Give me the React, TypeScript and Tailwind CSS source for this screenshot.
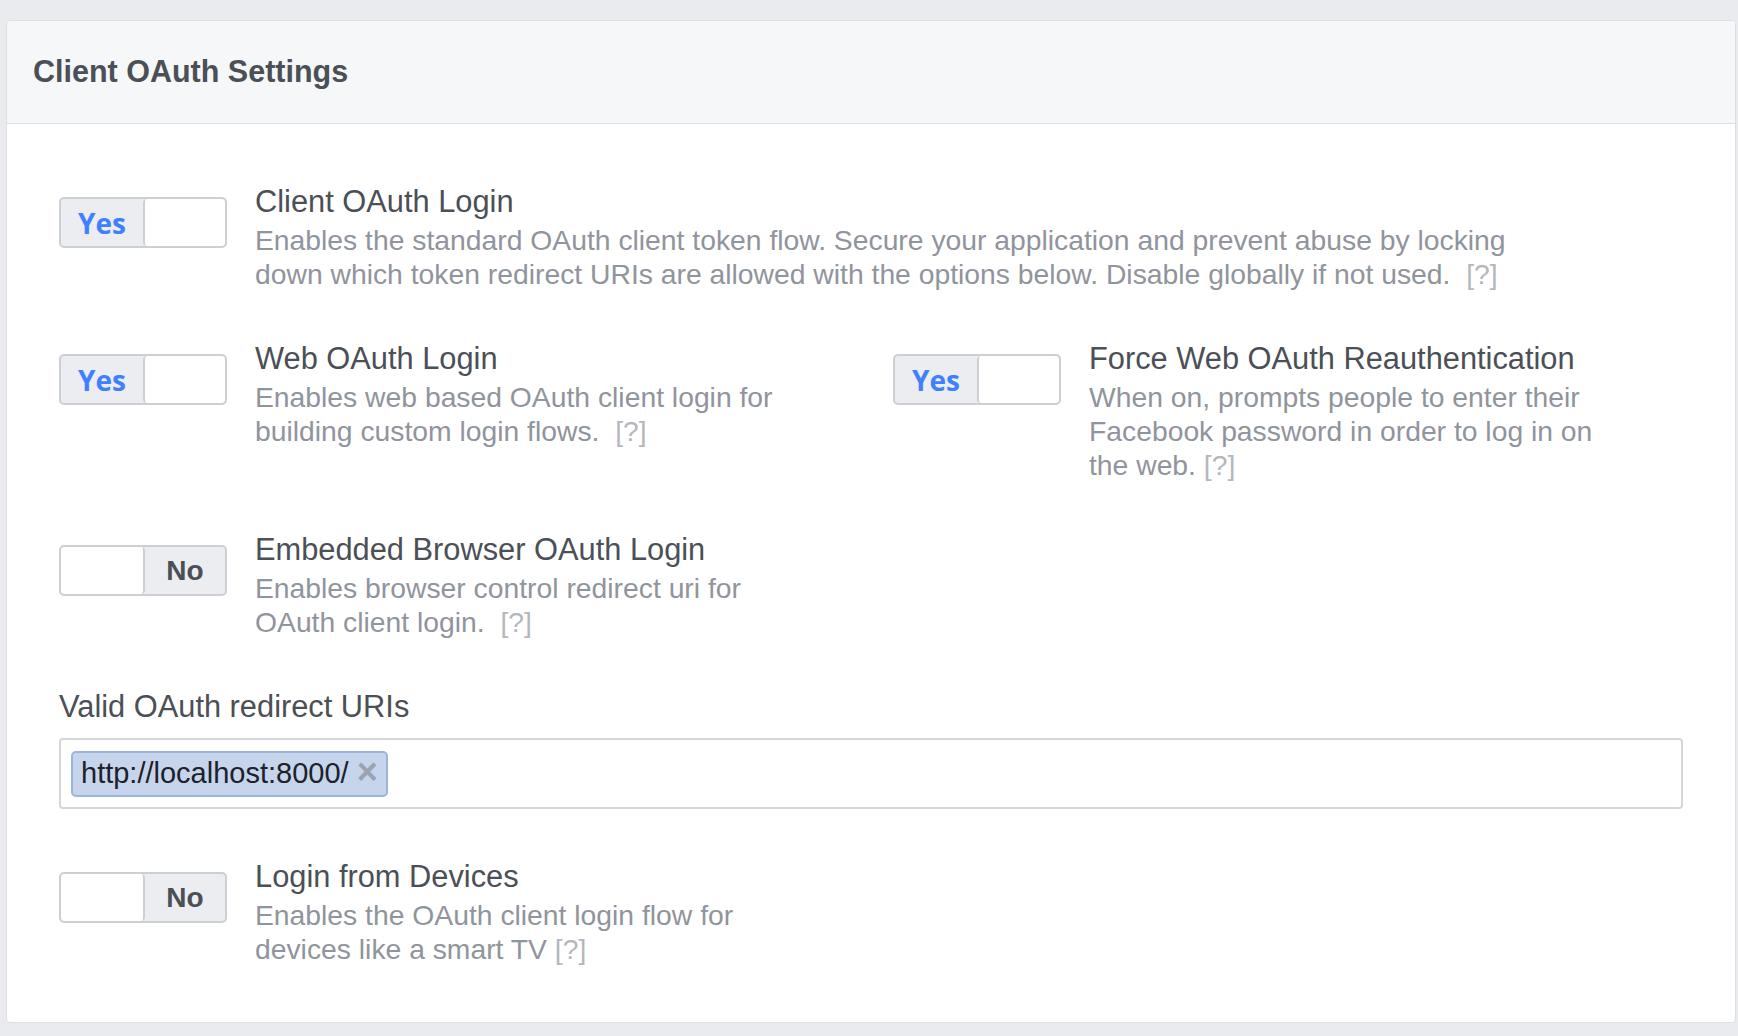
import React from 'react';

const Toggle: React.FC<{ on: boolean }> = ({ on }) => (
  <div className="flex h-[51px] w-[168px] shrink-0 overflow-hidden rounded-[5px] border-2 border-[#ccd0d5] bg-[#ebedf0]">
    {on ? (
      <>
        <div className="flex flex-1 items-center justify-center font-['Open_Sans',sans-serif] text-[28px] font-bold text-[#4080ff]">
          Yes
        </div>
        <div className="w-[82px] rounded-[4px] border-l-2 border-[#ccd0d5] bg-white" />
      </>
    ) : (
      <>
        <div className="w-[84px] rounded-[4px] border-r-2 border-[#ccd0d5] bg-white" />
        <div className="flex flex-1 items-center justify-center text-[28px] font-bold text-[#4b4f56]">No</div>
      </>
    )}
  </div>
);

const Help: React.FC<{ gap?: boolean }> = ({ gap = true }) => (
  <span className="text-[#b4b7bd]">{gap ? '\u00a0\u00a0' : '\u00a0'}[?]</span>
);

const Setting: React.FC<{ on: boolean; title: string; lines: React.ReactNode[] }> = ({ on, title, lines }) => (
  <div className="flex items-start gap-[28px]">
    <div className="mt-[16px]">
      <Toggle on={on} />
    </div>
    <div className="whitespace-nowrap">
      <div className="text-[30.8px] leading-[42px] text-[#4b4f56]">{title}</div>
      <div className="text-[28.3px] leading-[34px] text-[#90949c]">
        {lines.map((line, i) => (
          <div key={i}>{line}</div>
        ))}
      </div>
    </div>
  </div>
);

export default function App() {
  return (
    <div className="min-h-screen bg-[#e9ebee] pb-[16px] pl-[6px] pr-[2px] pt-[20px] font-['Liberation_Sans',Arial,sans-serif]">
      <div className="overflow-hidden rounded-[4px] border border-[#dddfe2] bg-white">
        {/* Header */}
        <div className="flex h-[103px] items-center border-b border-[#dddfe2] bg-[#f6f7f9] pl-[26px]">
          <h2 className="text-[30.5px] font-bold text-[#4b4f56]">Client OAuth Settings</h2>
        </div>

        <div className="flex flex-col gap-[47px] px-[52px] pb-[56px] pt-[57px]">
          <Setting
            on
            title="Client OAuth Login"
            lines={[
              'Enables the standard OAuth client token flow. Secure your application and prevent abuse by locking',
              <>
                down which token redirect URIs are allowed with the options below. Disable globally if not used.
                <Help />
              </>,
            ]}
          />

          <div className="grid grid-cols-2 gap-x-[44px]">
            <Setting
              on
              title="Web OAuth Login"
              lines={[
                'Enables web based OAuth client login for',
                <>
                  building custom login flows.
                  <Help />
                </>,
              ]}
            />
            <Setting
              on
              title="Force Web OAuth Reauthentication"
              lines={[
                'When on, prompts people to enter their',
                'Facebook password in order to log in on',
                <>
                  the web.
                  <Help gap={false} />
                </>,
              ]}
            />
          </div>

          <Setting
            on={false}
            title="Embedded Browser OAuth Login"
            lines={[
              'Enables browser control redirect uri for',
              <>
                OAuth client login.
                <Help />
              </>,
            ]}
          />

          <div>
            <div className="text-[30.8px] leading-[42px] text-[#4b4f56]">Valid OAuth redirect URIs</div>
            <div className="mt-[10px] flex h-[71px] items-center rounded-[4px] border-2 border-[#d3d6db] bg-white px-[10px]">
              <div className="flex h-[46px] items-center gap-[8px] rounded-[5px] border-2 border-[#9cb4d8] bg-[#c6d5ec] pl-[8px] pr-[8px]">
                <span className="text-[29px] text-[#1d2129]">http://localhost:8000/</span>
                <span className="-mt-[4px] text-[36px] font-bold leading-none text-[#9aa3b0]">×</span>
              </div>
            </div>
          </div>

          <Setting
            on={false}
            title="Login from Devices"
            lines={[
              'Enables the OAuth client login flow for',
              <>
                devices like a smart TV
                <Help gap={false} />
              </>,
            ]}
          />
        </div>
      </div>
    </div>
  );
}
